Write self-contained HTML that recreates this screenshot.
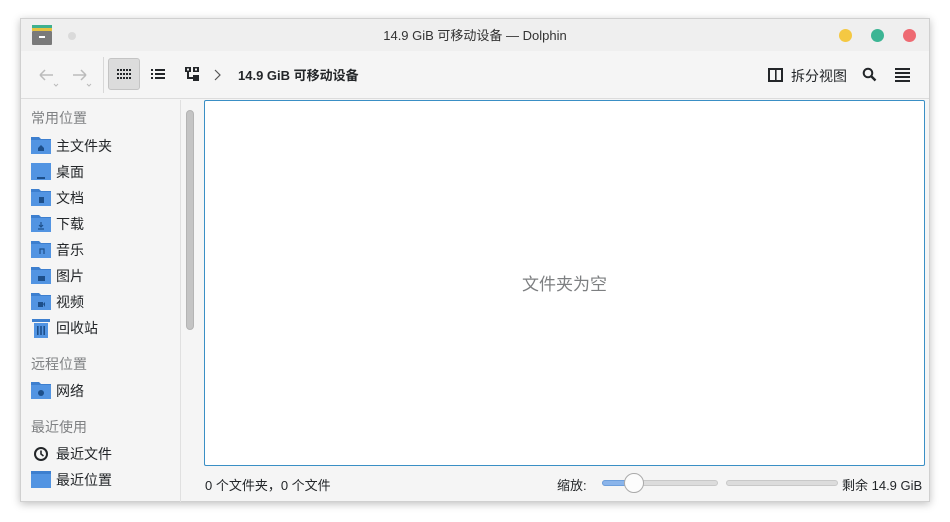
<!DOCTYPE html>
<html><head><meta charset="utf-8"><style>
*{margin:0;padding:0;box-sizing:border-box}
body{width:950px;height:522px;background:#fff;font-family:"Liberation Sans","Noto Sans CJK SC",sans-serif;position:relative;overflow:hidden;color:#232629}
.win{position:absolute;left:20px;top:18px;width:910px;height:484px;background:#f5f5f5;box-shadow:0 2px 8px rgba(0,0,0,.25);border:1px solid #d0d0d0}
.title{position:absolute;left:0;top:0;width:100%;height:32px;background:#efefef;font-size:13px;text-align:center;line-height:34px;color:#333}
.dot{position:absolute;top:10px;width:13px;height:13px;border-radius:50%}
.tb{position:absolute;left:0;top:32px;width:100%;height:48px;background:#f5f5f5;border-bottom:1px solid #dcdcdc}
.ab{position:absolute}
.side{position:absolute;left:0;top:79px;width:160px;height:402px;}
.item{position:absolute;left:10px;font-size:14px;height:20px;line-height:20px}
.item svg{position:absolute;left:0;top:0}
.item span{position:absolute;left:25px;white-space:nowrap}
.hdr{position:absolute;left:10px;font-size:14px;color:#7f8183}
.view{position:absolute;left:183px;top:81px;width:721px;height:366px;background:#fff;border:1px solid #3a8fc5;border-radius:2px}
</style></head><body>
<div class="win">
 <div class="title">14.9 GiB 可移动设备 — Dolphin
  <svg class="ab" style="left:11px;top:6px" width="20" height="20"><rect x="0" y="0" width="20" height="3" fill="#3fb18f"/><rect x="0" y="3" width="20" height="3" fill="#e6c240"/><rect x="0" y="6" width="20" height="14" rx="1" fill="#7a7a7a"/><rect x="7" y="11" width="6" height="2" fill="#fff"/></svg>
  <div class="dot" style="left:47px;top:13px;width:8px;height:8px;background:#dadada"></div>
  <div class="dot" style="left:818px;background:#f4c842"></div>
  <div class="dot" style="left:850px;background:#3cb594"></div>
  <div class="dot" style="left:882px;background:#ee6a72"></div>
 </div>
 <div class="tb">
  <svg class="ab" style="left:16px;top:16px" width="24" height="22"><path d="M3 8h13M3 8l5-5M3 8l5 5" stroke="#bbb" stroke-width="1.5" fill="none"/><path d="M17 17l2 2 2-2" stroke="#bbb" fill="none"/></svg>
  <svg class="ab" style="left:50px;top:16px" width="24" height="22"><path d="M2 8h13M15 8l-5-5M15 8l-5 5" stroke="#bbb" stroke-width="1.5" fill="none"/><path d="M16 17l2 2 2-2" stroke="#bbb" fill="none"/></svg>
  <div class="ab" style="left:82px;top:6px;width:1px;height:36px;background:#d8d8d8"></div>
  <div class="ab" style="left:87px;top:7px;width:32px;height:32px;background:#dcdcdc;border:1px solid #c4c4c4;border-radius:3px"></div>
  <svg class="ab" style="left:96px;top:18px" width="14" height="10"><g fill="#232629"><rect x="0" y="0" width="2" height="2"/><rect x="3" y="0" width="2" height="2"/><rect x="6" y="0" width="2" height="2"/><rect x="9" y="0" width="2" height="2"/><rect x="12" y="0" width="2" height="2"/><rect x="0" y="4" width="2" height="2"/><rect x="3" y="4" width="2" height="2"/><rect x="6" y="4" width="2" height="2"/><rect x="9" y="4" width="2" height="2"/><rect x="12" y="4" width="2" height="2"/><rect x="0" y="8" width="2" height="2"/><rect x="3" y="8" width="2" height="2"/><rect x="6" y="8" width="2" height="2"/><rect x="9" y="8" width="2" height="2"/><rect x="12" y="8" width="2" height="2"/></g></svg>
  <svg class="ab" style="left:130px;top:17px" width="14" height="12"><g fill="#232629"><rect x="0" y="1" width="2" height="2"/><rect x="4" y="1" width="10" height="2"/><rect x="0" y="5" width="2" height="2"/><rect x="4" y="5" width="10" height="2"/><rect x="0" y="9" width="2" height="2"/><rect x="4" y="9" width="10" height="2"/></g></svg>
  <svg class="ab" style="left:164px;top:16px" width="14" height="14"><g fill="#232629"><rect x="0" y="0" width="6" height="5"/><rect x="8" y="0" width="6" height="5"/><rect x="8" y="8" width="6" height="6"/><rect x="2" y="5" width="2" height="7"/><rect x="2" y="10" width="6" height="2"/></g><rect x="2" y="1.5" width="2" height="2" fill="#f5f5f5"/><rect x="10" y="1.5" width="2" height="2" fill="#f5f5f5"/></svg>
  <svg class="ab" style="left:193px;top:18px" width="8" height="12"><path d="M1 1l5 5-5 5" stroke="#555" stroke-width="1.2" fill="none"/></svg>
  <div class="ab" style="left:217px;top:14px;font-size:13px;font-weight:bold">14.9 GiB 可移动设备</div>
  <svg class="ab" style="left:747px;top:17px" width="15" height="14"><rect x="1" y="1" width="13" height="12" stroke="#232629" stroke-width="2" fill="none"/><rect x="7" y="1" width="1.6" height="12" fill="#232629"/></svg>
  <div class="ab" style="left:770px;top:15px;font-size:14px">拆分视图</div>
  <svg class="ab" style="left:841px;top:16px" width="15" height="15"><circle cx="6" cy="6" r="4.3" stroke="#232629" stroke-width="2" fill="none"/><path d="M9 9l4.5 4.5" stroke="#232629" stroke-width="2.4"/></svg>
  <svg class="ab" style="left:874px;top:17px" width="15" height="14"><g fill="#232629"><rect y="0" width="15" height="2"/><rect y="4" width="15" height="2"/><rect y="8" width="15" height="2"/><rect y="12" width="15" height="2"/></g></svg>
 </div>
 <div class="side">
  <div class="hdr" style="top:10px">常用位置</div>
  <div class="item" style="top:38px"><svg width="20" height="18"><path d="M0 1h8l2 2h10v15H0z" fill="#3d7fcf"/><rect x="0" y="4" width="20" height="14" fill="#5294e2"/><path d="M7 12l3-3 3 3v3H7z" fill="#1d4f8a"/></svg><span>主文件夹</span></div>
  <div class="item" style="top:64px"><svg width="20" height="18"><rect x="0" y="1" width="20" height="17" fill="#5294e2"/><rect x="6" y="15" width="8" height="2" fill="#1d4f8a"/></svg><span>桌面</span></div>
  <div class="item" style="top:90px"><svg width="20" height="18"><path d="M0 1h8l2 2h10v15H0z" fill="#3d7fcf"/><rect x="0" y="4" width="20" height="14" fill="#5294e2"/><rect x="8" y="9" width="5" height="6" fill="#1d4f8a"/></svg><span>文档</span></div>
  <div class="item" style="top:116px"><svg width="20" height="18"><path d="M0 1h8l2 2h10v15H0z" fill="#3d7fcf"/><rect x="0" y="4" width="20" height="14" fill="#5294e2"/><path d="M10 8v5M8 11l2 2 2-2M7 15h6" stroke="#1d4f8a" stroke-width="1.2" fill="none"/></svg><span>下载</span></div>
  <div class="item" style="top:142px"><svg width="20" height="18"><path d="M0 1h8l2 2h10v15H0z" fill="#3d7fcf"/><rect x="0" y="4" width="20" height="14" fill="#5294e2"/><path d="M9 14V9h4v5" stroke="#1d4f8a" stroke-width="1.2" fill="none"/></svg><span>音乐</span></div>
  <div class="item" style="top:168px"><svg width="20" height="18"><path d="M0 1h8l2 2h10v15H0z" fill="#3d7fcf"/><rect x="0" y="4" width="20" height="14" fill="#5294e2"/><rect x="7" y="10" width="7" height="5" fill="#1d4f8a"/></svg><span>图片</span></div>
  <div class="item" style="top:194px"><svg width="20" height="18"><path d="M0 1h8l2 2h10v15H0z" fill="#3d7fcf"/><rect x="0" y="4" width="20" height="14" fill="#5294e2"/><rect x="7" y="10" width="5" height="5" fill="#1d4f8a"/><path d="M12 12l2-2v5z" fill="#1d4f8a"/></svg><span>视频</span></div>
  <div class="item" style="top:220px"><svg width="20" height="20"><rect x="1" y="1" width="18" height="3" fill="#3d7fcf"/><rect x="3" y="5" width="14" height="15" fill="#5294e2"/><g fill="#1d4f8a"><rect x="6" y="8" width="1.6" height="9"/><rect x="9.2" y="8" width="1.6" height="9"/><rect x="12.4" y="8" width="1.6" height="9"/></g></svg><span>回收站</span></div>
  <div class="hdr" style="top:256px">远程位置</div>
  <div class="item" style="top:283px"><svg width="20" height="18"><path d="M0 1h8l2 2h10v15H0z" fill="#3d7fcf"/><rect x="0" y="4" width="20" height="14" fill="#5294e2"/><circle cx="10" cy="12" r="3" fill="#1d4f8a"/></svg><span>网络</span></div>
  <div class="hdr" style="top:319px">最近使用</div>
  <div class="item" style="top:346px"><svg width="20" height="20"><circle cx="10" cy="10" r="6" stroke="#232629" stroke-width="2" fill="none"/><path d="M10 6.5V10l2.5 2" stroke="#232629" stroke-width="1.6" fill="none"/></svg><span>最近文件</span></div>
  <div class="item" style="top:372px"><svg width="20" height="18"><rect x="0" y="1" width="20" height="17" fill="#5294e2"/><rect x="0" y="1" width="20" height="3" fill="#3d7fcf"/></svg><span>最近位置</span></div>
 </div>
 <div class="ab" style="left:165px;top:91px;width:8px;height:220px;background:#c4c4c4;border-radius:4px;border:1px solid #b4b4b4"></div>
 <div class="ab" style="left:159px;top:81px;width:1px;height:402px;background:#e0e0e0"></div>
 <div class="view"><div style="position:absolute;left:0;width:100%;top:169px;text-align:center;font-size:17px;color:#7d7f81">文件夹为空</div></div>
 <div class="ab" style="left:184px;top:456px;font-size:13px">0 个文件夹，0 个文件</div>
 <div class="ab" style="left:536px;top:456px;font-size:13px">缩放:</div>
 <div class="ab" style="left:581px;top:461px;width:116px;height:6px;border-radius:3px;background:#dcdcdc;border:1px solid #c8c8c8"></div>
 <div class="ab" style="left:581px;top:461px;width:30px;height:6px;border-radius:3px;background:#8ab4ea;border:1px solid #6d9fdc"></div>
 <div class="ab" style="left:603px;top:454px;width:20px;height:20px;border-radius:50%;background:#fcfcfc;border:1px solid #aaa"></div>
 <div class="ab" style="left:705px;top:461px;width:112px;height:6px;border-radius:3px;background:#dcdcdc;border:1px solid #c8c8c8"></div>
 <div class="ab" style="left:821px;top:456px;font-size:13px">剩余 14.9 GiB</div>
</div>
</body></html>
